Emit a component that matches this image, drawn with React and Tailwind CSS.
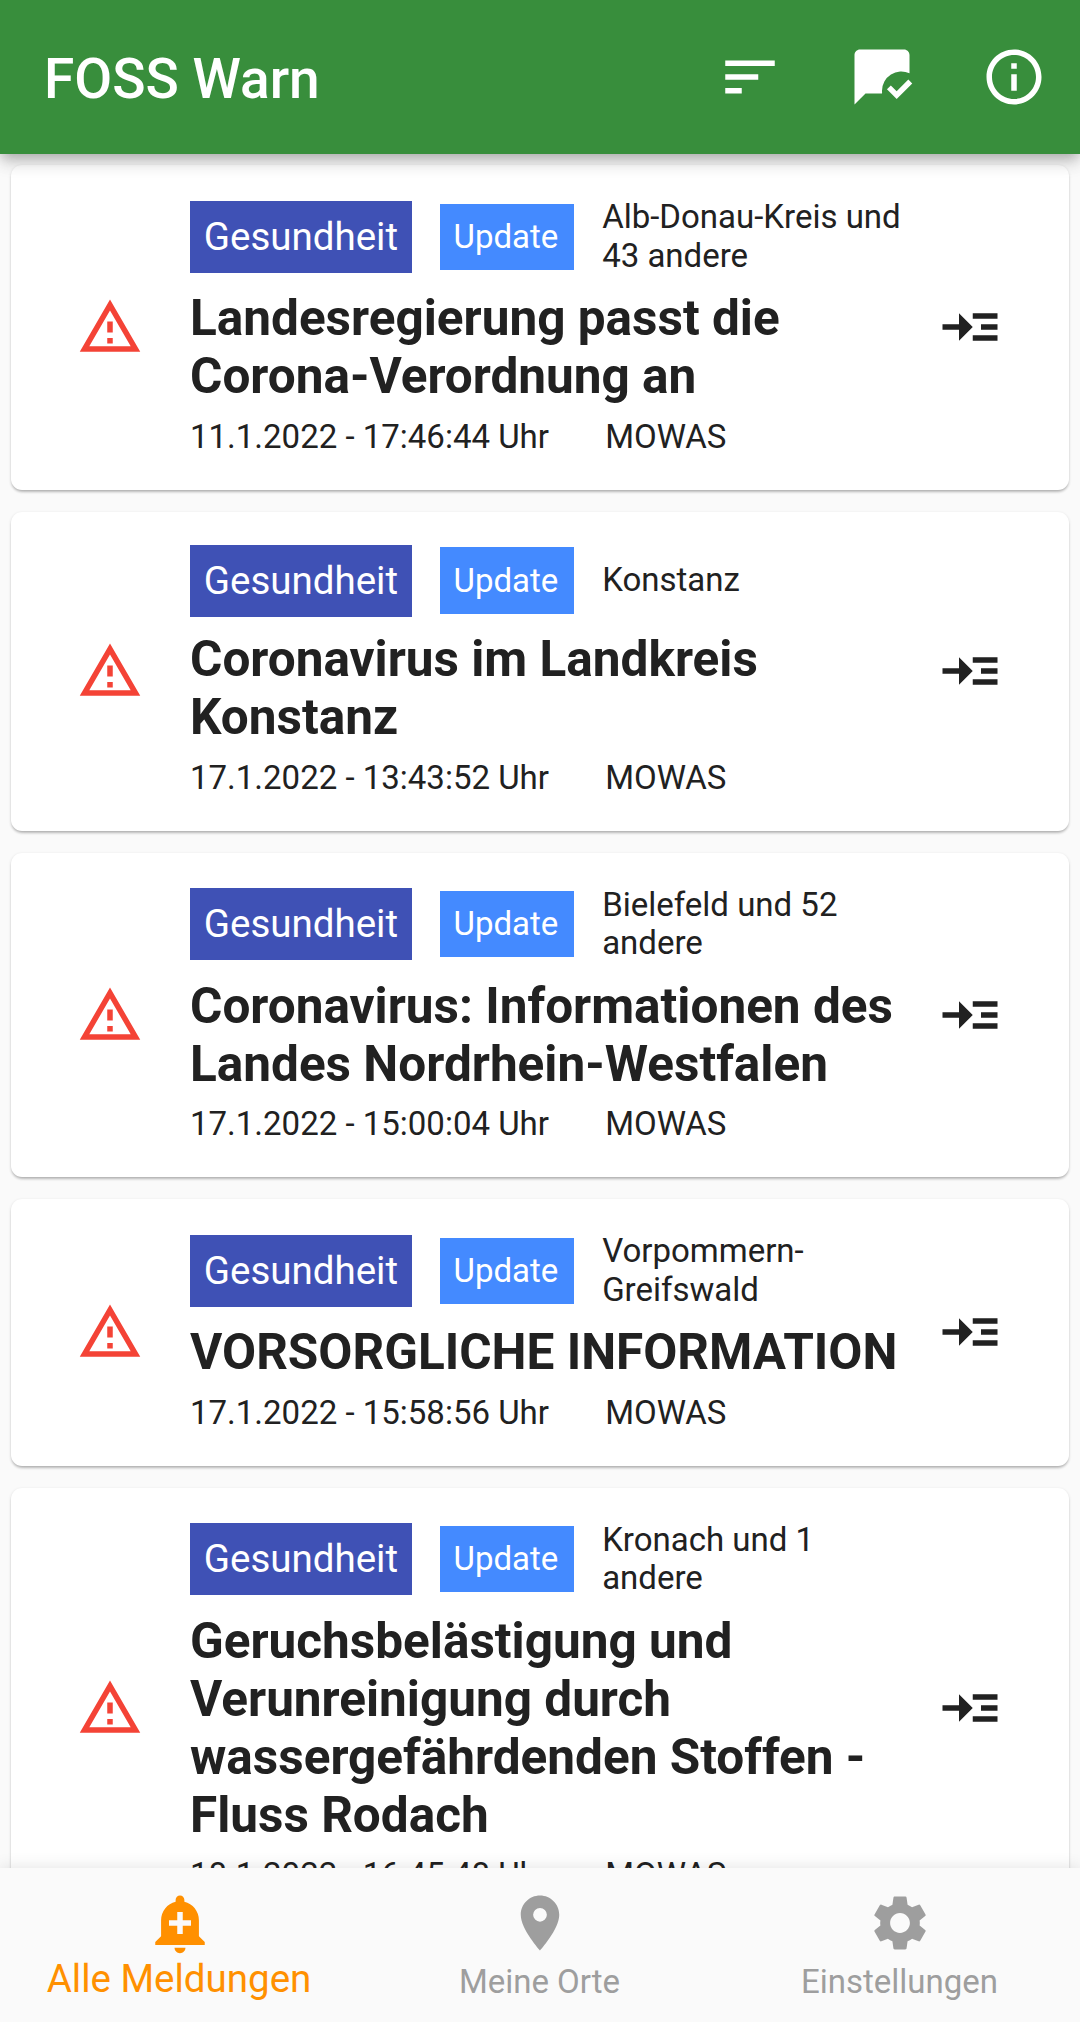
import React from "react";
import {
  MdSort,
  MdMarkChatRead,
  MdInfoOutline,
  MdReadMore,
  MdAddAlert,
  MdPlace,
  MdSettings,
} from "react-icons/md";

const warnings = [
  {
    area: ["Alb-Donau-Kreis und", "43 andere"],
    title: ["Landesregierung passt die", "Corona-Verordnung an"],
    date: "11.1.2022 - 17:46:44 Uhr",
  },
  {
    area: ["Konstanz"],
    title: ["Coronavirus im Landkreis", "Konstanz"],
    date: "17.1.2022 - 13:43:52 Uhr",
  },
  {
    area: ["Bielefeld und 52", "andere"],
    title: ["Coronavirus: Informationen des", "Landes Nordrhein-Westfalen"],
    date: "17.1.2022 - 15:00:04 Uhr",
  },
  {
    area: ["Vorpommern-", "Greifswald"],
    title: ["VORSORGLICHE INFORMATION"],
    date: "17.1.2022 - 15:58:56 Uhr",
  },
  {
    area: ["Kronach und 1", "andere"],
    title: ["Geruchsbelästigung und", "Verunreinigung durch", "wassergefährdenden Stoffen -", "Fluss Rodach"],
    date: "18.1.2022 - 16:45:48 Uhr",
  },
];

function Lines({ items }) {
  return items.map((line) => (
    <span key={line} className="block whitespace-nowrap">
      {line}
    </span>
  ));
}

function WarningIcon() {
  return (
    <svg viewBox="0 0 24 24" fill="currentColor" className="size-[66px] text-[#f44336]">
      <path d="M12 5.99L19.53 19H4.47L12 5.99M12 2L1 21h22L12 2zm1 14h-2v2h2v-2zm0-6h-2v4h2v-4z" />
    </svg>
  );
}

function WarningCard({ area, title, date }) {
  return (
    <article className="flex shrink-0 items-center rounded-[11px] bg-white py-[33px] shadow-[0_3px_3px_-1px_rgba(0,0,0,0.2),0_1px_3px_rgba(0,0,0,0.16)]">
      <div className="flex w-[179px] shrink-0 justify-center pl-[19px]">
        <WarningIcon />
      </div>
      <div className="flex min-w-0 flex-1 flex-col">
        <div className="flex items-center">
          <span className="bg-[#3f51b5] pt-[14px] pr-[14px] pb-[13.5px] pl-[13.75px] text-[38.5px] leading-[44.5px] text-white">Gesundheit</span>
          <span className="ml-[27.5px] bg-[#448aff] pt-[14.2px] pr-[15.5px] pb-[13.3px] pl-[14px] text-[33px] leading-[38.7px] text-white">Update</span>
          <span className="ml-[28.3px] text-[33px] leading-[38.7px]">
            <Lines items={area} />
          </span>
        </div>
        <h2 className="mt-[13.9px] text-[49.5px] leading-[58px] font-bold">
          <Lines items={title} />
        </h2>
        <div className="mt-[12.5px] flex gap-[56.3px] text-[33px] leading-[38.7px]">
          <span>{date}</span>
          <span>MOWAS</span>
        </div>
      </div>
      <div className="mr-[33px] flex w-[132px] shrink-0 justify-center">
        <MdReadMore className="size-[66px]" />
      </div>
    </article>
  );
}

function BarButton({ icon: Icon, label }) {
  return (
    <button aria-label={label} className="flex size-[132px] items-center justify-center">
      <Icon className="size-[66px]" />
    </button>
  );
}

export default function App() {
  return (
    <div className="flex h-[2022px] w-[1080px] flex-col overflow-hidden bg-[#fafafa] font-['Roboto',sans-serif] text-[#212121]">
      <header className="z-10 flex h-[154px] shrink-0 items-center bg-[#388e3c] pl-[44px] text-white shadow-[0_5px_11px_-3px_rgba(0,0,0,0.2),0_11px_14px_rgba(0,0,0,0.1),0_3px_20px_rgba(0,0,0,0.1)]">
        <h1 className="flex-1 pt-[3px] text-[55px] leading-[64px] font-medium">FOSS Warn</h1>
        <BarButton icon={MdSort} label="Sortieren" />
        <BarButton icon={MdMarkChatRead} label="Gelesen" />
        <BarButton icon={MdInfoOutline} label="Info" />
      </header>
      <main className="flex min-h-0 flex-1 flex-col gap-[22px] overflow-hidden px-[11px] pt-[11px]">
        {warnings.map((w) => (
          <WarningCard key={w.date} {...w} />
        ))}
      </main>
      <nav className="z-10 grid h-[154px] shrink-0 grid-cols-3 bg-[#fafafa] text-[#9e9e9e] shadow-[0_0_16px_rgba(0,0,0,0.12)]">
        <div className="flex flex-col items-center pt-[22px] text-[#ff9000]">
          <MdAddAlert className="size-[66px]" />
          <span className="mr-[2px] text-[38.5px] leading-[45px]">Alle Meldungen</span>
        </div>
        <div className="flex flex-col items-center pt-[22px]">
          <MdPlace className="size-[66px]" />
          <span className="mt-[7px] mr-px text-[33px] leading-[38.7px]">Meine Orte</span>
        </div>
        <div className="flex flex-col items-center pt-[22px]">
          <MdSettings className="size-[66px]" />
          <span className="mt-[7px] mr-px text-[33px] leading-[38.7px]">Einstellungen</span>
        </div>
      </nav>
    </div>
  );
}
